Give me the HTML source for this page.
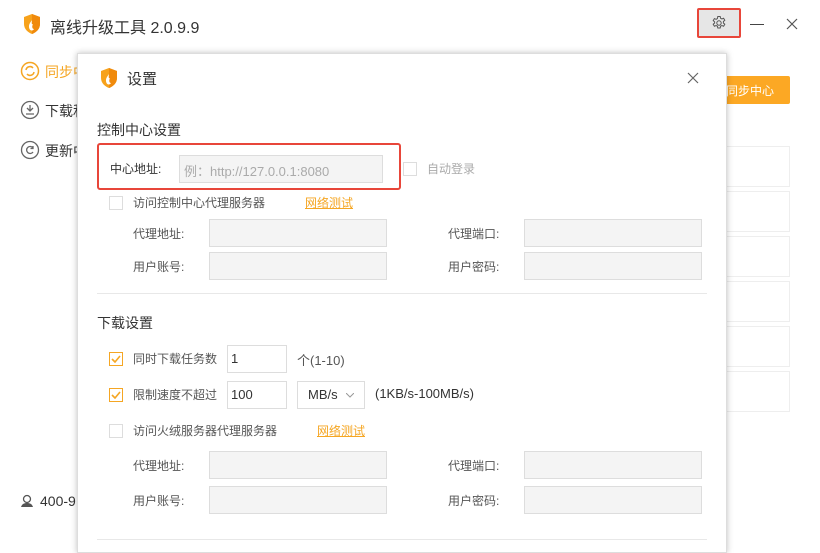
<!DOCTYPE html>
<html><head><meta charset="utf-8"><style>
*{margin:0;padding:0;box-sizing:border-box}
body{width:820px;height:540px;overflow:hidden;background:#fff;font-family:"Liberation Sans","Noto Sans CJK SC",sans-serif;color:#333;position:relative}
.a{position:absolute}
.inp{position:absolute;height:28px;border:1px solid #ddd;background:#f4f4f4}
.inpw{position:absolute;height:28px;border:1px solid #ddd;background:#fff;font-size:13px;padding:5px 0 0 3px;color:#333}
.cb{position:absolute;width:14px;height:14px;border:1px solid #ddd;background:#fff}
.cbo{position:absolute;width:14px;height:14px;border:1px solid #f5a623;background:#fff}
.lbl{position:absolute;font-size:12px;color:#555}
.link{position:absolute;font-size:12px;color:#f5a623;text-decoration:underline}
.card{position:absolute;left:700px;width:90px;height:41px;border:1px solid #eee}
</style></head><body>
<svg class="a" style="left:22px;top:13px" width="20" height="22" viewBox="0 0 20 22"><path d="M10 1 L18 4 V11 C18 16 14 19.5 10 21 C6 19.5 2 16 2 11 V4 Z" fill="#f7a21b"/><path d="M10 1 L18 4 V11 C18 16 14 19.5 10 21Z" fill="#f08a0c"/><path d="M10 7 C8 10 6 12 7.5 16 C8.5 18 11 18 12 16 C10.5 16 9.5 14 11 11 C9.5 12 9.5 10 10 7Z" fill="#fff"/></svg>
<div class="a" style="left:50px;top:14px;font-size:16px;color:#333">离线升级工具 2.0.9.9</div>
<div class="a" style="left:697px;top:8px;width:44px;height:30px;border:2px solid #e8463a;border-radius:2px;background:#e6e6e6"></div>
<svg class="a" style="left:711px;top:15px" width="16" height="16" viewBox="0 0 16 16"><circle cx="8" cy="8" r="2.2" fill="none" stroke="#555" stroke-width="1"/><path d="M6.8 1.5h2.4l.4 1.8 1.3.7 1.7-.7 1.2 2-1.4 1.2v1.5l1.4 1.2-1.2 2-1.7-.7-1.3.7-.4 1.8H6.8l-.4-1.8-1.3-.7-1.7.7-1.2-2 1.4-1.2V6.8L2.2 5.6l1.2-2 1.7.7 1.3-.7z" fill="none" stroke="#555" stroke-width="1"/></svg>
<div class="a" style="left:750px;top:24px;width:14px;height:1px;background:#444"></div>
<svg class="a" style="left:786px;top:18px" width="12" height="12"><path d="M1 1L11 11M11 1L1 11" stroke="#555" stroke-width="1.2"/></svg>
<svg class="a" style="left:20px;top:61px" width="20" height="20"><circle cx="10" cy="10" r="8.5" fill="none" stroke="#f5a623" stroke-width="1.5"/><path d="M6 9a4 4 0 0 1 7-2M14 11a4 4 0 0 1-7 2" fill="none" stroke="#f5a623" stroke-width="1.5"/></svg>
<div class="a" style="left:45px;top:62px;font-size:14px;color:#f5a623">同步中</div>
<svg class="a" style="left:20px;top:100px" width="20" height="20"><circle cx="10" cy="10" r="8.5" fill="none" stroke="#666" stroke-width="1.3"/><path d="M10 5v6M7 8l3 3 3-3M6 14h8" fill="none" stroke="#666" stroke-width="1.3"/></svg>
<div class="a" style="left:45px;top:101px;font-size:14px">下载和</div>
<svg class="a" style="left:20px;top:140px" width="20" height="20"><circle cx="10" cy="10" r="8.5" fill="none" stroke="#666" stroke-width="1.3"/><path d="M13 8a3.5 3.5 0 1 0 0 4M13 6v2.5h-2.5" fill="none" stroke="#666" stroke-width="1.3"/></svg>
<div class="a" style="left:45px;top:141px;font-size:14px">更新中</div>
<svg class="a" style="left:20px;top:494px" width="14" height="14"><circle cx="7" cy="5" r="3.5" fill="none" stroke="#555" stroke-width="1.3"/><path d="M1 13c1-3 3-4 6-4s5 1 6 4z" fill="#555"/></svg>
<div class="a" style="left:40px;top:493px;font-size:14px">400-9</div>
<div class="a" style="left:700px;top:76px;width:90px;height:28px;background:#fca824;border-radius:2px;color:#fff;font-size:12px;padding:6px 0 0 26px">同步中心</div>
<div class="card" style="top:146px"></div><div class="card" style="top:191px"></div><div class="card" style="top:236px"></div><div class="card" style="top:281px"></div><div class="card" style="top:326px"></div><div class="card" style="top:371px"></div>
<div class="a" style="left:77px;top:53px;width:650px;height:500px;background:#fff;border:1px solid #ddd;box-shadow:0 0 6px rgba(0,0,0,.25)"></div>
<svg class="a" style="left:99px;top:67px" width="20" height="22" viewBox="0 0 20 22"><path d="M10 1 L18 4 V11 C18 16 14 19.5 10 21 C6 19.5 2 16 2 11 V4 Z" fill="#f7a21b"/><path d="M10 1 L18 4 V11 C18 16 14 19.5 10 21Z" fill="#f08a0c"/><path d="M10 7 C8 10 6 12 7.5 16 C8.5 18 11 18 12 16 C10.5 16 9.5 14 11 11 C9.5 12 9.5 10 10 7Z" fill="#fff"/></svg>
<div class="a" style="left:127px;top:68px;font-size:15px">设置</div>
<svg class="a" style="left:687px;top:72px" width="12" height="12"><path d="M1 1L11 11M11 1L1 11" stroke="#666" stroke-width="1.2"/></svg>
<div class="a" style="left:97px;top:120px;font-size:14px">控制中心设置</div>
<div class="a" style="left:97px;top:143px;width:304px;height:47px;border:2px solid #e8463a;border-radius:3px"></div>
<div class="lbl" style="left:110px;top:160px;color:#333">中心地址:</div>
<div class="a" style="left:179px;top:155px;width:204px;height:28px;border:1px solid #ddd;background:#f4f4f4;font-size:13px;color:#aaa;padding:5px 0 0 4px">例：http://127.0.0.1:8080</div>
<div class="cb" style="left:403px;top:162px"></div>
<div class="lbl" style="left:427px;top:160px;color:#aaa">自动登录</div>
<div class="cb" style="left:109px;top:196px"></div>
<div class="lbl" style="left:133px;top:194px">访问控制中心代理服务器</div>
<div class="link" style="left:305px;top:194px">网络测试</div>
<div class="lbl" style="left:133px;top:225px">代理地址:</div><div class="inp" style="left:209px;top:219px;width:178px"></div>
<div class="lbl" style="left:448px;top:225px">代理端口:</div><div class="inp" style="left:524px;top:219px;width:178px"></div>
<div class="lbl" style="left:133px;top:258px">用户账号:</div><div class="inp" style="left:209px;top:252px;width:178px"></div>
<div class="lbl" style="left:448px;top:258px">用户密码:</div><div class="inp" style="left:524px;top:252px;width:178px"></div>
<div class="a" style="left:97px;top:293px;width:610px;height:1px;background:#e8e8e8"></div>
<div class="a" style="left:97px;top:313px;font-size:14px">下载设置</div>
<div class="cbo" style="left:109px;top:352px"></div><svg class="a" style="left:111px;top:355px" width="10" height="8"><path d="M1 4l3 3 5-6" fill="none" stroke="#f5a623" stroke-width="1.6"/></svg>
<div class="lbl" style="left:133px;top:350px">同时下载任务数</div>
<div class="inpw" style="left:227px;top:345px;width:60px">1</div>
<div class="lbl" style="left:297px;top:350px;font-size:13px">个(1-10)</div>
<div class="cbo" style="left:109px;top:388px"></div><svg class="a" style="left:111px;top:391px" width="10" height="8"><path d="M1 4l3 3 5-6" fill="none" stroke="#f5a623" stroke-width="1.6"/></svg>
<div class="lbl" style="left:133px;top:386px">限制速度不超过</div>
<div class="inpw" style="left:227px;top:381px;width:60px">100</div>
<div class="inpw" style="left:297px;top:381px;width:68px;padding-left:10px">MB/s</div>
<svg class="a" style="left:346px;top:393px" width="8" height="5"><path d="M0 0l4 4 4-4" fill="none" stroke="#999"/></svg>
<div class="lbl" style="left:375px;top:386px;color:#333;font-size:13px">(1KB/s-100MB/s)</div>
<div class="cb" style="left:109px;top:424px"></div>
<div class="lbl" style="left:133px;top:422px">访问火绒服务器代理服务器</div>
<div class="link" style="left:317px;top:422px">网络测试</div>
<div class="lbl" style="left:133px;top:457px">代理地址:</div><div class="inp" style="left:209px;top:451px;width:178px"></div>
<div class="lbl" style="left:448px;top:457px">代理端口:</div><div class="inp" style="left:524px;top:451px;width:178px"></div>
<div class="lbl" style="left:133px;top:492px">用户账号:</div><div class="inp" style="left:209px;top:486px;width:178px"></div>
<div class="lbl" style="left:448px;top:492px">用户密码:</div><div class="inp" style="left:524px;top:486px;width:178px"></div>
<div class="a" style="left:97px;top:539px;width:610px;height:1px;background:#e8e8e8"></div>
</body></html>
